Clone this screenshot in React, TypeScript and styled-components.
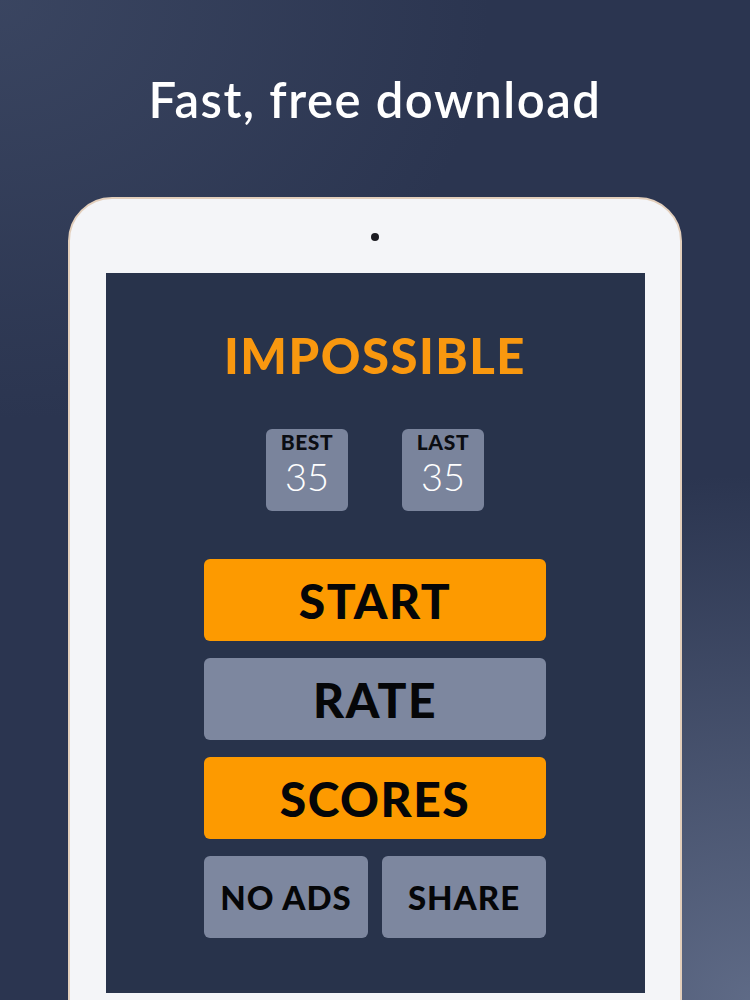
import React from 'react'
import styled, { createGlobalStyle } from 'styled-components'

const Global = createGlobalStyle`
  html, body {
    margin: 0;
    padding: 0;
  }
  body {
    font-family: Lato, "Noto Sans", sans-serif;
  }
`

const Page = styled.main`
  width: 750px;
  height: 1000px;
  overflow: hidden;
  box-sizing: border-box;
  padding-top: 70px;
  background:
    radial-gradient(ellipse 700px 600px at 0% 0%, rgba(70, 82, 110, 0.55), transparent 70%),
    radial-gradient(ellipse 800px 700px at 100% 100%, rgba(100, 112, 140, 0.9), transparent 75%),
    #2b3550;
`

const Headline = styled.h1`
  margin: 0;
  text-align: center;
  color: #ffffff;
  font-family: Lato, sans-serif;
  font-weight: 600;
  font-size: 49px;
  line-height: 58px;
  letter-spacing: 1.5px;
`

const Tablet = styled.div`
  margin: 69px 0 0 68px;
  width: 614px;
  height: 900px;
  box-sizing: border-box;
  background: #f4f5f8;
  border: 2px solid #e3cfbc;
  border-radius: 44px;
  display: flex;
  flex-direction: column;
  align-items: center;
`

const Camera = styled.div`
  width: 8px;
  height: 8px;
  border-radius: 50%;
  background: #1c1c22;
  margin: 34px 0 32px;
`

const Screen = styled.div`
  width: 539px;
  height: 720px;
  background: #28334b;
  display: flex;
  flex-direction: column;
  align-items: center;
  padding-top: 52px;
  box-sizing: border-box;
`

const Title = styled.div`
  color: #f9980f;
  font-family: Lato, sans-serif;
  font-weight: 900;
  font-size: 49px;
  line-height: 60px;
  letter-spacing: 1.5px;
`

const ScoreRow = styled.div`
  display: flex;
  gap: 54px;
  margin-top: 44px;
`

const ScoreBox = styled.div`
  width: 82px;
  height: 82px;
  border-radius: 6px;
  background: #7a849c;
  display: flex;
  flex-direction: column;
  align-items: center;
  padding-top: 2px;
  box-sizing: border-box;
`

const ScoreLabel = styled.div`
  color: #0b0d12;
  font-weight: 900;
  font-size: 21px;
  line-height: 22px;
  letter-spacing: 0.6px;
`

const ScoreValue = styled.div`
  color: #ffffff;
  font-weight: 300;
  font-size: 38px;
  line-height: 46px;
`

const Menu = styled.div`
  width: 342px;
  margin-top: 48px;
  display: grid;
  grid-template-columns: 1fr 1fr;
  gap: 17px 14px;
`

const MenuButton = styled.button<{ $accent?: boolean; $small?: boolean }>`
  grid-column: ${p => (p.$small ? 'auto' : '1 / -1')};
  height: 82px;
  border: none;
  border-radius: 6px;
  background: ${p => (p.$accent ? '#fd9a00' : '#7d879f')};
  color: #050608;
  font-family: Lato, sans-serif;
  font-weight: 900;
  font-size: ${p => (p.$small ? '33px' : '48px')};
  letter-spacing: ${p => (p.$small ? '1px' : '1.5px')};
  padding: 0;
  cursor: pointer;
`

export default function App() {
  return (
    <>
      <Global />
      <Page>
        <Headline>Fast, free download</Headline>
        <Tablet>
          <Camera />
          <Screen>
            <Title>IMPOSSIBLE</Title>
            <ScoreRow>
              <ScoreBox>
                <ScoreLabel>BEST</ScoreLabel>
                <ScoreValue>35</ScoreValue>
              </ScoreBox>
              <ScoreBox>
                <ScoreLabel>LAST</ScoreLabel>
                <ScoreValue>35</ScoreValue>
              </ScoreBox>
            </ScoreRow>
            <Menu>
              <MenuButton $accent>START</MenuButton>
              <MenuButton>RATE</MenuButton>
              <MenuButton $accent>SCORES</MenuButton>
              <MenuButton $small>NO ADS</MenuButton>
              <MenuButton $small>SHARE</MenuButton>
            </Menu>
          </Screen>
        </Tablet>
      </Page>
    </>
  )
}
